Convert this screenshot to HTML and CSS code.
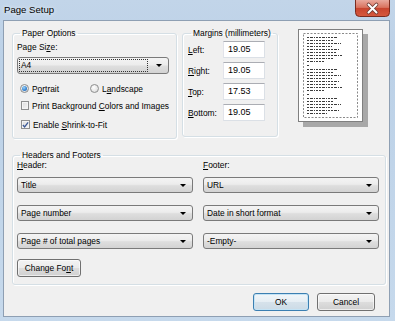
FILE: index.html
```html
<!DOCTYPE html>
<html>
<head>
<meta charset="utf-8">
<link rel="stylesheet" href="styles.css">
</head>
<body>
<div class="window">
  <div class="titlebar">
    <span class="title">Page Setup</span>
    <span class="close">
      <svg width="35" height="17" viewBox="0 0 35 17">
        <defs>
          <linearGradient id="cg" x1="0" y1="0" x2="0" y2="1">
            <stop offset="0" stop-color="#e9a99d"/>
            <stop offset="0.45" stop-color="#d9735f"/>
            <stop offset="0.5" stop-color="#c8452f"/>
            <stop offset="1" stop-color="#d65a3f"/>
          </linearGradient>
        </defs>
        <path d="M0.5 0 V12.5 Q0.5 16.5 4.5 16.5 H30.5 Q34.5 16.5 34.5 12.5 V0" fill="url(#cg)" stroke="#7a2c20"/>
        <path d="M13.5 4.5 L21.5 12.5 M21.5 4.5 L13.5 12.5" stroke="#6b3a33" stroke-width="3.6" stroke-linecap="round"/>
        <path d="M13.5 4.5 L21.5 12.5 M21.5 4.5 L13.5 12.5" stroke="#ffffff" stroke-width="2" stroke-linecap="round"/>
      </svg>
    </span>
  </div>
  <div class="client">
    <div class="top">
      <fieldset class="group paper">
        <legend>Paper Options</legend>
        <div class="label">Page Si<u>z</u>e:</div>
        <div class="combo focused"><span class="val">A4</span><span class="arrow"></span></div>
        <div class="radios">
          <div class="radio on"><span class="dot"></span><span>P<u>o</u>rtrait</span></div>
          <div class="radio"><span class="dot"></span><span>L<u>a</u>ndscape</span></div>
        </div>
        <div class="check"><span class="box"></span><span>Print Background <u>C</u>olors and Images</span></div>
        <div class="check on"><span class="box"><svg width="8" height="8" viewBox="0 0 8 8"><path d="M1 4 L3 6.3 L7 1" fill="none" stroke="#3d5a96" stroke-width="1.5"/></svg></span><span>Enable <u>S</u>hrink-to-Fit</span></div>
      </fieldset>
      <fieldset class="group margins">
        <legend>Margins (millimeters)</legend>
        <div class="mrow"><span class="mlabel"><u>L</u>eft:</span><span class="input">19.05</span></div>
        <div class="mrow"><span class="mlabel"><u>R</u>ight:</span><span class="input">19.05</span></div>
        <div class="mrow"><span class="mlabel"><u>T</u>op:</span><span class="input">17.53</span></div>
        <div class="mrow"><span class="mlabel"><u>B</u>ottom:</span><span class="input">19.05</span></div>
      </fieldset>
      <div class="preview">
        <svg width="71" height="99" viewBox="0 0 71 99">
          <rect x="5" y="5" width="65" height="93" fill="#a8a8a8"/>
          <rect x="0.5" y="0.5" width="64" height="92" fill="#ffffff" stroke="#7f7f7f"/>
          <rect x="5.5" y="4.5" width="54" height="84" fill="none" stroke="#8a8a8a" stroke-dasharray="2 1.5"/>
          <g stroke="#3b3b3b" stroke-width="1" stroke-dasharray="2 1 3 1 1 1 2 1">
            <line x1="9" y1="8.5" x2="40" y2="8.5"/>
            <line x1="9" y1="11.5" x2="36" y2="11.5"/>
            <line x1="9" y1="14.5" x2="43" y2="14.5"/>
            <line x1="9" y1="17.5" x2="34" y2="17.5"/>
            <line x1="9" y1="20.5" x2="41" y2="20.5"/>
            <line x1="9" y1="23.5" x2="38" y2="23.5"/>
            <line x1="9" y1="26.5" x2="44" y2="26.5"/>
            <line x1="9" y1="29.5" x2="35" y2="29.5"/>
            <line x1="9" y1="32.5" x2="26" y2="32.5"/>
            <line x1="9" y1="36.5" x2="11" y2="36.5"/>
            <line x1="9" y1="40.5" x2="40" y2="40.5"/>
            <line x1="9" y1="43.5" x2="36" y2="43.5"/>
            <line x1="9" y1="46.5" x2="43" y2="46.5"/>
            <line x1="9" y1="49.5" x2="34" y2="49.5"/>
            <line x1="9" y1="52.5" x2="41" y2="52.5"/>
            <line x1="9" y1="55.5" x2="38" y2="55.5"/>
            <line x1="9" y1="58.5" x2="44" y2="58.5"/>
            <line x1="9" y1="61.5" x2="26" y2="61.5"/>
            <line x1="9" y1="65.5" x2="11" y2="65.5"/>
            <line x1="9" y1="69.5" x2="40" y2="69.5"/>
            <line x1="9" y1="72.5" x2="36" y2="72.5"/>
            <line x1="9" y1="75.5" x2="43" y2="75.5"/>
            <line x1="9" y1="78.5" x2="34" y2="78.5"/>
            <line x1="9" y1="81.5" x2="41" y2="81.5"/>
            <line x1="9" y1="84.5" x2="30" y2="84.5"/>
          </g>
        </svg>
      </div>
    </div>
    <fieldset class="group hf">
      <legend>Headers and Footers</legend>
      <div class="hfgrid">
        <div class="label"><u>H</u>eader:</div>
        <div class="label"><u>F</u>ooter:</div>
        <div class="combo"><span class="val">Title</span><span class="arrow"></span></div>
        <div class="combo"><span class="val">URL</span><span class="arrow"></span></div>
        <div class="combo"><span class="val">Page number</span><span class="arrow"></span></div>
        <div class="combo"><span class="val">Date in short format</span><span class="arrow"></span></div>
        <div class="combo"><span class="val">Page # of total pages</span><span class="arrow"></span></div>
        <div class="combo"><span class="val">-Empty-</span><span class="arrow"></span></div>
        <div class="btn font">Change Fo<u>n</u>t</div>
      </div>
    </fieldset>
    <div class="buttons">
      <div class="btn ok">OK</div>
      <div class="btn cancel">Cancel</div>
    </div>
  </div>
</div>
</body>
</html>
```
FILE: styles.css
```css
html, body {
  margin: 0;
  padding: 0;
}
body {
  width: 395px;
  height: 321px;
  overflow: hidden;
  font-family: "Liberation Sans", Arial, sans-serif;
  font-size: 8.4px;
  color: #000;
}
u { text-decoration-thickness: 1px; text-underline-offset: 1px; }

.window {
  width: 395px;
  height: 321px;
  box-sizing: border-box;
  padding: 0 5px 4px 3px;
  display: flex;
  flex-direction: column;
  background: linear-gradient(180deg, #c2d5e9 0%, #bcd1e7 20%, #c6d9ec 100%);
}
.titlebar {
  height: 20px;
  flex: none;
  display: flex;
  justify-content: space-between;
  align-items: flex-start;
}
.title {
  font-size: 9.6px;
  line-height: 12px;
  margin-top: 4px;
  margin-left: 1px;
  text-shadow: 0 0 4px rgba(255,255,255,0.9);
}
.close { display: block; height: 17px; }
.close svg { display: block; }

.client {
  flex: 1;
  background: #f0f0f0;
  border: 1px solid #8e9fb3;
  padding: 7px 4px 0 8px;
  display: flex;
  flex-direction: column;
}

.group {
  margin: 0;
  border: 1px solid #d5dfe5;
  border-radius: 3px;
  box-shadow: inset 1px 1px 0 #fff, 1px 1px 0 #fff;
  min-width: 0;
}
.group legend {
  padding: 0 2px;
  margin-left: 3px;
  line-height: 10px;
}

.top {
  display: flex;
  align-items: flex-start;
}
.paper {
  width: 165px;
  height: 111px;
  box-sizing: border-box;
  padding: 4px 7px 0 4px;
}
.label { line-height: 11px; height: 11px; white-space: nowrap; }

.combo {
  box-sizing: border-box;
  height: 16px;
  border: 1px solid #7a7a7a;
  border-radius: 3px;
  background: linear-gradient(180deg, #f4f4f4 0%, #ececec 45%, #dedede 55%, #d3d3d3 100%);
  display: flex;
  align-items: center;
  padding: 0 6px 0 3px;
}
.combo .val { flex: 1; line-height: 12px; white-space: nowrap; }
.combo .arrow {
  width: 0;
  height: 0;
  border-left: 3px solid transparent;
  border-right: 3px solid transparent;
  border-top: 3px solid #000;
}
.paper .combo { height: 17px; margin-top: 4px; padding-left: 1px; }
.combo.focused .val {
  margin-right: 8px;
  outline: 1px dotted #333;
  outline-offset: -1px;
  padding-left: 2px;
  line-height: 13px;
}

.radios {
  display: flex;
  margin-top: 8px;
  padding-left: 3px;
  height: 13px;
  align-items: center;
}
.radio {
  display: flex;
  align-items: center;
  gap: 3px;
  white-space: nowrap;
}
.radio:first-child { width: 70px; }
.dot {
  width: 9px;
  height: 9px;
  box-sizing: border-box;
  border-radius: 50%;
  border: 1px solid #8e8f8f;
  background: radial-gradient(circle at 40% 35%, #ffffff 0%, #e6e6e6 60%, #cfcfcf 100%);
  display: flex;
  align-items: center;
  justify-content: center;
}
.radio.on .dot::after {
  content: "";
  width: 5px;
  height: 5px;
  border-radius: 50%;
  background: radial-gradient(circle at 40% 35%, #9fd3f6 0%, #3a87d4 55%, #1c5aa8 100%);
}
.check {
  display: flex;
  align-items: center;
  gap: 3px;
  padding-left: 4px;
  height: 13px;
  margin-top: 4px;
  white-space: nowrap;
}
.check + .check { margin-top: 6px; }
.box {
  width: 9px;
  height: 9px;
  box-sizing: border-box;
  border: 1px solid #8e8f8f;
  background: linear-gradient(135deg, #dcdcdc 0%, #f6f6f6 100%);
  box-shadow: inset 0 0 0 1px #f4f4f4;
  display: flex;
  align-items: center;
  justify-content: center;
}
.box svg { display: block; }

.margins {
  width: 96px;
  height: 109px;
  box-sizing: border-box;
  margin-left: 5px;
  padding: 3px 0 0 5px;
  display: flex;
  flex-direction: column;
  gap: 4px;
}
.mrow {
  display: flex;
  align-items: center;
  height: 17px;
}
.mlabel { width: 35px; line-height: 12px; }
.input {
  box-sizing: border-box;
  width: 42px;
  height: 17px;
  background: #fff;
  border: 1px solid #dbe0e6;
  border-top-color: #abadb3;
  border-left-color: #e2e3ea;
  line-height: 15px;
  padding-left: 4px;
  font-size: 9px;
}
.preview {
  margin-left: 20px;
  margin-top: 1px;
}
.preview svg { display: block; }

.hf {
  margin-top: 11px;
  width: 374px;
  box-sizing: border-box;
  padding: 0 7px 7px 4px;
}
.hfgrid {
  display: grid;
  grid-template-columns: 176px 176px;
  column-gap: 10px;
  row-gap: 12px;
}
.hfgrid .label { margin-bottom: -6px; }
.hfgrid .btn.font { margin-top: -2px; }

.btn {
  box-sizing: border-box;
  height: 18px;
  border: 1px solid #707070;
  border-radius: 3px;
  background: linear-gradient(180deg, #f3f3f3 0%, #ebebeb 48%, #dddddd 52%, #d0d0d0 100%);
  box-shadow: inset 0 0 0 1px rgba(255,255,255,0.6);
  display: flex;
  align-items: center;
  justify-content: center;
  line-height: 12px;
  white-space: nowrap;
}
.btn.font { width: 64px; }
.buttons {
  display: flex;
  justify-content: flex-end;
  gap: 8px;
  margin-top: 8px;
  margin-right: 10px;
}
.btn.ok {
  width: 56px;
  border-color: #3c7fb1;
  background: linear-gradient(180deg, #f1f6f9 0%, #e6eef4 48%, #d6e2eb 52%, #ccdbe6 100%);
  box-shadow: inset 0 0 0 1px #c4e3f5;
}
.btn.cancel { width: 58px; }
```
